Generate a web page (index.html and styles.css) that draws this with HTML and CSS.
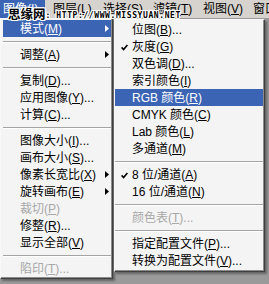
FILE: index.html
```html
<!DOCTYPE html>
<html lang="zh-CN">
<head>
    <meta charset="UTF-8">
    <meta name="viewport" content="width=device-width, initial-scale=1.0">
    <title>图像菜单</title>
    <link rel="stylesheet" href="styles.css">
</head>
<body>
    <div class="menubar">
        <span class="top-item active">图像(<u>I</u>)</span>
        <span class="top-item">图层(<u>L</u>)</span>
        <span class="top-item">选择(<u>S</u>)</span>
        <span class="top-item">滤镜(<u>T</u>)</span>
        <span class="top-item">视图(<u>V</u>)</span>
        <span class="top-item">窗口(<u>W</u>)</span>
    </div>

    <div class="watermark">
        <span class="wm-name">思缘网</span><span class="wm-url">: HTTP://WWW.MISSYUAN.NET</span>
    </div>

    <div class="menus">
        <ul class="menu main-menu">
            <li class="item selected"><span class="gutter"></span><span class="label">模式(<u>M</u>)</span><svg class="arrow" width="4" height="7" viewBox="0 0 4 7"><polygon points="0,0 4,3.5 0,7"/></svg></li>
            <li class="sep"></li>
            <li class="item"><span class="gutter"></span><span class="label">调整(<u>A</u>)</span><svg class="arrow" width="4" height="7" viewBox="0 0 4 7"><polygon points="0,0 4,3.5 0,7"/></svg></li>
            <li class="sep"></li>
            <li class="item"><span class="gutter"></span><span class="label">复制(<u>D</u>)...</span></li>
            <li class="item"><span class="gutter"></span><span class="label">应用图像(<u>Y</u>)...</span></li>
            <li class="item"><span class="gutter"></span><span class="label">计算(<u>C</u>)...</span></li>
            <li class="sep"></li>
            <li class="item"><span class="gutter"></span><span class="label">图像大小(<u>I</u>)...</span></li>
            <li class="item"><span class="gutter"></span><span class="label">画布大小(<u>S</u>)...</span></li>
            <li class="item"><span class="gutter"></span><span class="label">像素长宽比(<u>X</u>)</span><svg class="arrow" width="4" height="7" viewBox="0 0 4 7"><polygon points="0,0 4,3.5 0,7"/></svg></li>
            <li class="item"><span class="gutter"></span><span class="label">旋转画布(<u>E</u>)</span><svg class="arrow" width="4" height="7" viewBox="0 0 4 7"><polygon points="0,0 4,3.5 0,7"/></svg></li>
            <li class="item disabled"><span class="gutter"></span><span class="label">裁切(<u>P</u>)</span></li>
            <li class="item"><span class="gutter"></span><span class="label">修整(<u>R</u>)...</span></li>
            <li class="item"><span class="gutter"></span><span class="label">显示全部(<u>V</u>)</span></li>
            <li class="sep"></li>
            <li class="item disabled"><span class="gutter"></span><span class="label">陷印(<u>T</u>)...</span></li>
        </ul>

        <ul class="menu sub-menu">
            <li class="item"><span class="gutter"></span><span class="label">位图(<u>B</u>)...</span></li>
            <li class="item"><span class="gutter"><svg class="check" width="7" height="7" viewBox="0 0 7 7"><polyline points="0.6,3.4 2.6,5.6 6.4,1"/></svg></span><span class="label">灰度(<u>G</u>)</span></li>
            <li class="item"><span class="gutter"></span><span class="label">双色调(<u>D</u>)...</span></li>
            <li class="item"><span class="gutter"></span><span class="label">索引颜色(<u>I</u>)</span></li>
            <li class="item selected"><span class="gutter"></span><span class="label">RGB 颜色(<u>R</u>)</span></li>
            <li class="item"><span class="gutter"></span><span class="label">CMYK 颜色(<u>C</u>)</span></li>
            <li class="item"><span class="gutter"></span><span class="label">Lab 颜色(<u>L</u>)</span></li>
            <li class="item"><span class="gutter"></span><span class="label">多通道(<u>M</u>)</span></li>
            <li class="sep"></li>
            <li class="item"><span class="gutter"><svg class="check" width="7" height="7" viewBox="0 0 7 7"><polyline points="0.6,3.4 2.6,5.6 6.4,1"/></svg></span><span class="label">8 位/通道(<u>A</u>)</span></li>
            <li class="item"><span class="gutter"></span><span class="label">16 位/通道(<u>N</u>)</span></li>
            <li class="sep"></li>
            <li class="item disabled"><span class="gutter"></span><span class="label">颜色表(<u>T</u>)...</span></li>
            <li class="sep"></li>
            <li class="item"><span class="gutter"></span><span class="label">指定配置文件(<u>P</u>)...</span></li>
            <li class="item"><span class="gutter"></span><span class="label">转换为配置文件(<u>V</u>)...</span></li>
        </ul>
    </div>
</body>
</html>
```

FILE: styles.css
```css
:root {
    --bar-color: #d6d3ce;
    --menu-color: #f4f4f4;
    --highlight: #3c64b4;
    --disabled: #a8a8a8;
    --workspace: #9a9a9a;
}

* {
    margin: 0;
    padding: 0;
    box-sizing: border-box;
}

html, body {
    width: 269px;
    height: 284px;
    overflow: hidden;
}

body {
    position: relative;
    background-color: var(--workspace);
    font-family: "Liberation Sans", "Noto Sans CJK SC", sans-serif;
    font-size: 12px;
    color: #000;
}

u {
    text-decoration: underline;
    text-underline-offset: 1px;
}

/* Top menu bar */
.menubar {
    display: flex;
    height: 18px;
    background-color: var(--bar-color);
    white-space: nowrap;
    overflow: hidden;
}

.top-item {
    flex: none;
    width: 45px;
    margin-right: 5px;
    padding-left: 3px;
    line-height: 18px;
}

.top-item.active {
    background-color: var(--highlight);
    color: #fff;
}

/* Site watermark pasted over the screenshot */
.watermark {
    position: absolute;
    top: 6px;
    left: 8px;
    display: flex;
    align-items: flex-start;
    white-space: nowrap;
    font-weight: bold;
    color: #000;
    text-shadow: 1px 0 #fff, -1px 0 #fff, 0 1px #fff, 0 -1px #fff,
                 1px 1px #fff, -1px -1px #fff, 1px -1px #fff, -1px 1px #fff;
}

.wm-name {
    font-family: "Noto Sans CJK SC", sans-serif;
    font-size: 12.5px;
    line-height: 15px;
}

.wm-url {
    margin-top: 5px;
    font-family: "DejaVu Sans Mono", monospace;
    font-size: 8px;
    line-height: 9px;
    letter-spacing: 0.6px;
}

/* Drop-down menus */
.menus {
    display: flex;
    align-items: flex-start;
    gap: 1px;
}

.menu {
    list-style: none;
    background-color: var(--menu-color);
    border: 1px solid;
    border-color: #f8f8f8 #404040 #404040 #f8f8f8;
    box-shadow: inset -1px -1px 0 #8c8c8c, 2px 2px 2px rgba(0, 0, 0, 0.35);
    white-space: nowrap;
}

.main-menu {
    width: 113px;
    padding: 1px 1px 1px 2px;
}

.sub-menu {
    width: 151px;
    margin-top: 1px;
    padding: 1px 1px 2px 0;
}

.item {
    display: flex;
    align-items: center;
    height: 17px;
    padding-top: 2px;
    padding-right: 2px;
    line-height: 15px;
}

.gutter {
    flex: none;
    display: flex;
    align-items: center;
    width: 17px;
    padding-left: 6px;
}

.label {
    flex: 1;
}

.item.selected {
    background-color: var(--highlight);
    color: #fff;
}

.item.disabled {
    color: var(--disabled);
}

.arrow {
    flex: none;
    fill: currentColor;
    margin-bottom: 2px;
}

.check {
    fill: none;
    stroke: #000;
    stroke-width: 1.6;
}

.sep {
    height: 2px;
    margin: 4px 0 3px;
    border-top: 1px solid #a4a4a4;
    border-bottom: 1px solid #fff;
}
```
